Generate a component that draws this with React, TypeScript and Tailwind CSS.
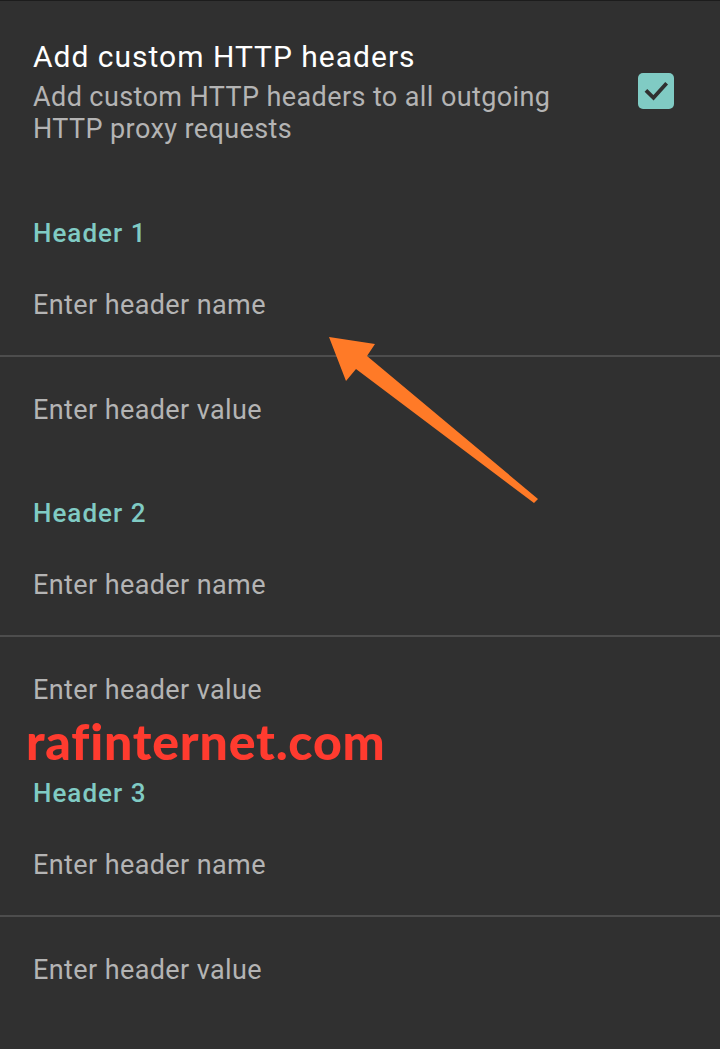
import React from 'react';

const groups = [1, 2, 3];

const App: React.FC = () => {
    return (
        <div className="relative w-[720px] h-[1049px] overflow-hidden bg-[#303030]" style={{ fontFamily: 'Roboto, "Noto Sans", sans-serif' }}>
            <div className="h-px bg-[#1c1c1c]"></div>

            {/* Switch preference */}
            <div className="flex items-start justify-between pl-[33px] pr-[46px] pt-[38px] h-[194px]">
                <div>
                    <div className="text-[30px] leading-[36px] tracking-[1px] text-white">Add custom HTTP headers</div>
                    <div className="mt-[6px] text-[27px] leading-[32px] tracking-[0.4px] text-[#b4b4b4] w-[560px]">
                        Add custom HTTP headers to all outgoing HTTP proxy requests
                    </div>
                </div>
                <div className="mt-[34px] w-9 h-9 rounded-[5px] bg-[#80cbc4] flex items-center justify-center">
                    <svg viewBox="0 0 24 24" className="w-[30px] h-[30px]" fill="none" stroke="#303030" strokeWidth={3} strokeLinecap="square">
                        <path d="M5 12.5l5 5L19.5 7" />
                    </svg>
                </div>
            </div>

            {groups.map((n) => (
                <div key={n}>
                    <div className="h-[76px] flex items-center px-[33px] text-[26px] tracking-[1px] font-medium text-[#80cbc4]">Header {n}</div>
                    <div className="h-[84px] px-[33px] pt-[18px]">
                        <div className="text-[27px] leading-[32px] tracking-[0.4px] text-[#b4b4b4]">Enter header name</div>
                    </div>
                    <div className="h-[2px] bg-[#4d4d4d]"></div>
                    <div className="h-[118px] px-[33px] pt-[37px]">
                        <div className="text-[27px] leading-[32px] tracking-[0.4px] text-[#b4b4b4]">Enter header value</div>
                    </div>
                </div>
            ))}

            {/* watermark */}
            <div className="absolute left-[26px] top-[713px] text-[50px] leading-[56px] font-black text-[#ff3b2f] tracking-[0.8px]" style={{ fontFamily: 'Lato, sans-serif' }}>
                rafinternet.com
            </div>

            {/* arrow annotation */}
            <svg className="absolute left-0 top-0" width="720" height="1049" viewBox="0 0 720 1049">
                <polygon
                    fill="#ff7a27"
                    points="329,337 375,344 367,356 538,499 534,503 356,369 346,381"
                />
            </svg>
        </div>
    );
};

export default App;
